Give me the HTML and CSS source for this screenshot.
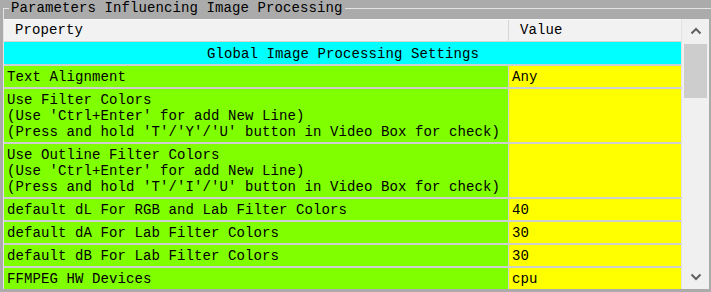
FILE: index.html
```html
<!DOCTYPE html>
<html>
<head>
<meta charset="utf-8">
<link rel="stylesheet" href="styles.css">
</head>
<body>
<div class="group">
  <div class="group-head">
    <span class="seg-left"></span>
    <span class="group-title">Parameters Influencing Image Processing</span>
    <span class="seg-right"></span>
  </div>
  <div class="grid-wrap">
    <div class="grid">
      <div class="row head">
        <div class="cell prop">Property</div>
        <div class="cell val">Value</div>
      </div>
      <div class="row section">
        <div class="cell full">Global Image Processing Settings</div>
      </div>
      <div class="row">
        <div class="cell prop">Text Alignment</div>
        <div class="cell val">Any</div>
      </div>
      <div class="row">
        <div class="cell prop">Use Filter Colors<br>(Use 'Ctrl+Enter' for add New Line)<br>(Press and hold 'T'/'Y'/'U' button in Video Box for check)</div>
        <div class="cell val"></div>
      </div>
      <div class="row">
        <div class="cell prop">Use Outline Filter Colors<br>(Use 'Ctrl+Enter' for add New Line)<br>(Press and hold 'T'/'I'/'U' button in Video Box for check)</div>
        <div class="cell val"></div>
      </div>
      <div class="row">
        <div class="cell prop">default dL For RGB and Lab Filter Colors</div>
        <div class="cell val">40</div>
      </div>
      <div class="row">
        <div class="cell prop">default dA For Lab Filter Colors</div>
        <div class="cell val">30</div>
      </div>
      <div class="row">
        <div class="cell prop">default dB For Lab Filter Colors</div>
        <div class="cell val">30</div>
      </div>
      <div class="row">
        <div class="cell prop">FFMPEG HW Devices</div>
        <div class="cell val">cpu</div>
      </div>
    </div>
    <div class="scrollbar">
      <div class="sb-btn">
        <svg width="12" height="8" viewBox="0 0 12 8"><path d="M1.5 6.5 L6 2 L10.5 6.5" fill="none" stroke="#606060" stroke-width="2"/></svg>
      </div>
      <div class="sb-track">
        <div class="sb-thumb"></div>
      </div>
      <div class="sb-btn">
        <svg width="12" height="8" viewBox="0 0 12 8"><path d="M1.5 1.5 L6 6 L10.5 1.5" fill="none" stroke="#606060" stroke-width="2"/></svg>
      </div>
    </div>
  </div>
</div>
</body>
</html>
```
FILE: styles.css
```css
html, body {
  margin: 0;
  padding: 0;
  background: #ababab;
  width: 711px;
  height: 292px;
  overflow: hidden;
}
body {
  font-family: "Liberation Mono", "DejaVu Sans Mono", monospace;
  font-size: 14px;
  letter-spacing: 0.1px;
  color: #000;
}
.group {
  padding-left: 3px;
  width: 708px;
}
.group-head {
  display: flex;
  height: 19px;
}
.seg-left {
  width: 6px;
  height: 11px;
  margin-top: 8px;
  border-top: 1px solid #e4e4e4;
  border-left: 1px solid #e4e4e4;
  box-sizing: border-box;
}
.seg-right {
  flex: 1;
  margin-top: 8px;
  border-top: 1px solid #e4e4e4;
}
.group-title {
  padding: 0 2px;
  line-height: 16px;
  white-space: nowrap;
}
.grid-wrap {
  display: flex;
  height: 270px;
  overflow: hidden;
  border-left: 1px solid #e4e4e4;
}
.grid {
  width: 677px;
  display: flex;
  flex-direction: column;
}
.row {
  display: flex;
  border-bottom: 2px solid #cfcfcf;
  background: #80ff00;
  flex: none;
}
.cell {
  padding: 3px 2px 2px 3px;
  line-height: 16px;
  white-space: nowrap;
  box-sizing: border-box;
}
.prop {
  width: 505px;
  border-right: 1px solid #cfcfcf;
}
.val {
  width: 172px;
  background: #ffff00;
}
.head {
  background: #f2f2f2;
  border-top: 1px solid #fafafa;
  border-bottom: 1px solid #d6d6d6;
}
.head .cell {
  padding: 2px 2px 3px 11px;
  background: #f2f2f2;
}
.head .prop {
  border-right: 1px solid #d6d6d6;
}
.section {
  background: #00ffff;
}
.section .cell {
  padding-top: 4px;
}
.full {
  width: 677px;
  text-align: center;
}
.scrollbar {
  width: 27px;
  background: #f0f0f0;
  border-left: 1px solid #e2e2e2;
  display: flex;
  flex-direction: column;
}
.sb-btn {
  height: 24px;
  flex: none;
  display: flex;
  align-items: center;
  justify-content: center;
}
.sb-track {
  flex: 1;
  padding: 1px 2px;
}
.sb-thumb {
  height: 54px;
  background: #cdcdcd;
}
```
